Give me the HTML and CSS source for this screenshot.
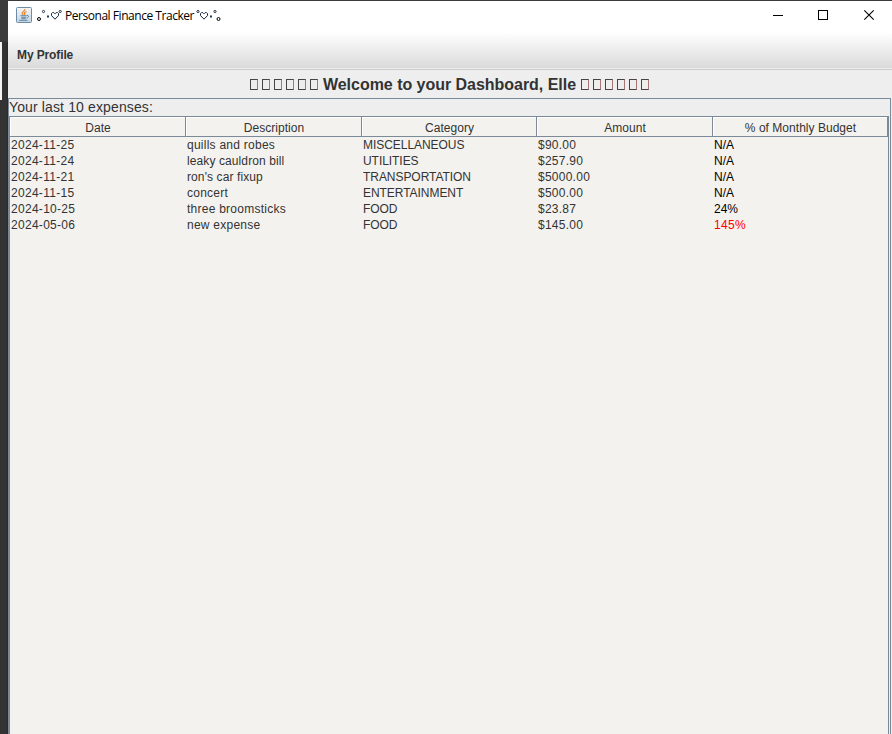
FILE: index.html
```html
<!DOCTYPE html>
<html lang="en">
<head>
<meta charset="utf-8">
<title>Personal Finance Tracker</title>
<link rel="stylesheet" href="styles.css">
</head>
<body>
<div class="desktop">
  <aside class="backdrop"><span class="edge-top"></span><span class="edge-light"></span></aside>
  <main class="window">
    <header class="titlebar">
      <svg class="java" width="16" height="16" viewBox="0 0 16 16">
        <defs><linearGradient id="tile" x1="0" y1="0" x2="0" y2="1"><stop offset="0" stop-color="#f6f8fa"/><stop offset="1" stop-color="#c3d3e0"/></linearGradient></defs>
        <rect x=".5" y=".5" width="15" height="15" rx="1" fill="url(#tile)" stroke="#6d8ca8"/>
        <path d="M8.8 2C9.6 4 5.5 4.7 6.2 6.5L7.3 8M10.5 4.5C8 5.5 8 6.3 9 7.8" fill="none" stroke="#f08020" stroke-width="1.2"/>
        <path d="M4.5 8.7h6.2M5.2 10.3h5M5.5 11.7h4.2M3.3 13.3h8.3M11 8.5c2.4-.3 2 2-.3 2.4" fill="none" stroke="#557b9b" stroke-width=".9"/>
      </svg>
      <svg class="deco" width="26" height="16" viewBox="0 0 26 16" fill="none">
        <circle cx="3" cy="11" r="1.5" stroke="#000"/>
        <circle cx="7.5" cy="3.5" r="1.1" stroke="#234"/>
        <rect x="11" y="7.5" width="2" height="2" fill="#173a68"/>
        <path d="M19 11.2L15.5 7.6V5.6L16.5 4.6H17.8L19 5.8L20.2 4.6H21.5L22.5 5.6V7.6Z" stroke="#13243c"/>
        <circle cx="24.2" cy="3.5" r="1.1" stroke="#234"/>
      </svg>
      <span class="title">Personal Finance Tracker</span>
      <svg class="deco" width="26" height="16" viewBox="0 0 26 16" fill="none">
        <circle cx="2" cy="3.5" r="1.1" stroke="#234"/>
        <path d="M8 11.2L4.5 7.6V5.6L5.5 4.6H6.8L8 5.8L9.2 4.6H10.5L11.5 5.6V7.6Z" stroke="#13243c"/>
        <rect x="14" y="7.5" width="2" height="2" fill="#173a68"/>
        <circle cx="19" cy="3.5" r="1.1" stroke="#234"/>
        <circle cx="22.5" cy="11" r="1.5" stroke="#000"/>
      </svg>
      <svg class="controls" width="102" height="12" viewBox="0 0 102 12" fill="none" stroke="#000">
        <path d="M0 6.5H10"/><rect x="45.5" y="1.5" width="9" height="9"/><path d="M91.3 1.3L100.7 10.7M100.7 1.3L91.3 10.7" stroke-width="1.1"/>
      </svg>
    </header>
    <nav class="menubar"><span class="menu">My Profile</span></nav>
    <h1 class="welcome">
      <span class="boxes"><i></i><i></i><i></i><i></i><i></i><i></i></span>
      <span class="greeting">Welcome to your Dashboard, Elle</span>
      <span class="boxes"><i></i><i></i><i></i><i></i><i></i><i></i></span>
    </h1>
    <section class="panel">
      <div class="caption"><span>Your last 10 expenses:</span></div>
      <div class="view">
        <div class="grid heads">
          <div>Date</div><div>Description</div><div>Category</div><div>Amount</div><div>% of Monthly Budget</div>
        </div>
        <div class="grid row"><span class="date">2024-11-25</span><span class="desc">quills and robes</span><span class="cat">MISCELLANEOUS</span><span class="amt">$90.00</span><span class="pct">N/A</span></div>
        <div class="grid row"><span class="date">2024-11-24</span><span class="desc tight">leaky cauldron bill</span><span class="cat">UTILITIES</span><span class="amt">$257.90</span><span class="pct">N/A</span></div>
        <div class="grid row"><span class="date">2024-11-21</span><span class="desc tight">ron's car fixup</span><span class="cat">TRANSPORTATION</span><span class="amt">$5000.00</span><span class="pct">N/A</span></div>
        <div class="grid row"><span class="date">2024-11-15</span><span class="desc">concert</span><span class="cat">ENTERTAINMENT</span><span class="amt">$500.00</span><span class="pct">N/A</span></div>
        <div class="grid row"><span class="date">2024-10-25</span><span class="desc">three broomsticks</span><span class="cat">FOOD</span><span class="amt">$23.87</span><span class="pct">24%</span></div>
        <div class="grid row"><span class="date">2024-05-06</span><span class="desc">new expense</span><span class="cat">FOOD</span><span class="amt">$145.00</span><span class="pct over">145%</span></div>
      </div>
    </section>
  </main>
</div>
</body>
</html>
```
FILE: styles.css
```css
* { box-sizing: border-box; }
body { margin: 0; overflow: hidden; font-family: "Liberation Sans", Arial, sans-serif; color: #333; }
.desktop { display: flex; width: 892px; height: 734px; padding-top: 1px; background: #3b3b3b; }
.backdrop { width: 8px; display: flex; flex-direction: column; background: linear-gradient(90deg, #333 0 6px, #292929 8px); }
.edge-top { height: 41px; background: #3b3b3b; }
.edge-light { width: 2px; height: 58px; background: #f4f4f4; }
.window { width: 884px; height: 733px; display: flex; flex-direction: column; background: #eee; }
.titlebar { height: 31px; display: flex; align-items: flex-start; padding: 6px 17px 0 8px; background: #fff; }
.java { margin-right: 4px; }
.deco { margin-top: 1px; }
.title { width: 130px; margin: 0 1px 0 3px; font: 12px/17px "Open Sans", "Noto Sans", sans-serif; letter-spacing: -0.46px; color: #000; white-space: nowrap; }
.controls { margin: 2px 0 0 auto; }
.menubar { height: 38px; padding: 15px 0 0 9px; background: linear-gradient(#fff, #dadada 36px, #eee 36px, #eee 37px, #ccc 37px); }
.menu { display: block; font-size: 12px; line-height: 16px; font-weight: bold; letter-spacing: -0.12px; }
.welcome { height: 28px; margin: 0; padding: 5px 1px 0 0; display: flex; justify-content: center; align-items: flex-start; gap: 5px; font-size: 16px; line-height: 19px; font-weight: bold; }
.boxes { display: flex; gap: 4px; padding-top: 4px; }
.boxes i { width: 8px; height: 11px; border: 1px solid #444; border-right-color: #a77; }
.greeting { white-space: nowrap; letter-spacing: -0.03px; }
.panel { flex: 1; width: 883px; border: solid #7a8a99; border-width: 1px 1px 0; }
.caption { height: 17px; font-size: 14px; line-height: 17px; letter-spacing: 0.13px; }
.view { width: 880px; height: 618px; border: solid #7a8a99; border-width: 1px 1px 0; background: #f4f2ee; }
.grid { display: grid; grid-template-columns: 176px 176px 175px 176px 175px; }
.heads { height: 20px; font-size: 12px; line-height: 17px; text-align: center; letter-spacing: 0.03px; }
.heads div { height: 20px; padding: 3px 0 0 1px; border: solid #7a8a99; border-width: 0 1px 1px 0; box-shadow: inset 1px 1px #fff; }
.row { height: 16px; font-size: 12px; line-height: 16px; }
.row span { padding-left: 1px; white-space: nowrap; }
.date { letter-spacing: 0.29px; }
.desc { letter-spacing: 0.25px; }
.desc.tight { letter-spacing: 0.1px; }
.cat { letter-spacing: -0.05px; }
.amt { letter-spacing: 0.25px; }
.pct { color: #000; }
.over { color: #f00; letter-spacing: 0.3px; }
```
